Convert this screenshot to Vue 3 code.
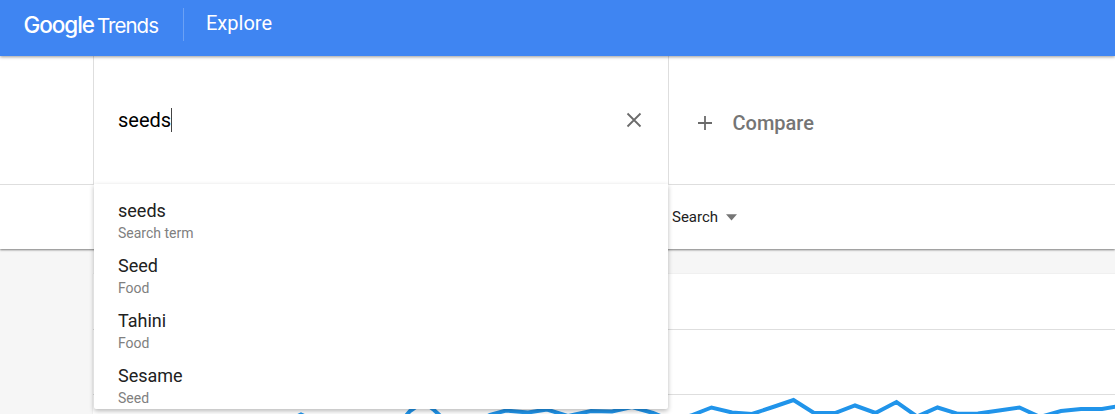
<script setup>
const suggestions = [
  { title: 'seeds', kind: 'Search term' },
  { title: 'Seed', kind: 'Food' },
  { title: 'Tahini', kind: 'Food' },
  { title: 'Sesame', kind: 'Seed' },
]
</script>

<template>
  <div class="page">
    <header class="topbar">
      <svg class="logo" width="140" height="40" viewBox="0 0 140 40">
        <text class="google" x="-0.5" y="26" textLength="71.5" lengthAdjust="spacing">Google</text>
        <text class="trends" x="73" y="26" textLength="62" lengthAdjust="spacing">Trends</text>
      </svg>
      <span class="divider"></span>
      <span class="section">Explore</span>
    </header>

    <section class="terms">
      <div class="term">
        <span class="query">seeds</span><span class="caret"></span>
        <svg class="close" width="16" height="16" viewBox="0 0 16 16">
          <path d="M1.5 1.5L14.5 14.5M14.5 1.5L1.5 14.5" />
        </svg>
        <ul class="menu">
          <li v-for="item in suggestions" :key="item.title">
            <span class="title">{{ item.title }}</span>
            <span class="kind">{{ item.kind }}</span>
          </li>
        </ul>
      </div>
      <div class="compare">
        <svg width="16" height="16" viewBox="0 0 16 16"><path d="M8 1V15M1 8H15" /></svg>
        <span>Compare</span>
      </div>
    </section>

    <section class="filters">
      <span>Search</span>
      <svg width="11" height="7" viewBox="0 0 11 7"><path d="M0 0.3H11L5.5 6.5Z" /></svg>
    </section>

    <main class="content">
      <div class="card">
        <div class="card-head"></div>
        <div class="card-tools"></div>
        <svg class="chart" width="1022" height="19" viewBox="93 395 1022 19">
          <polyline points="281,424 301,414.5 322,424" />
          <polyline points="398,425 410,411 423,402 434,410 447,422" />
          <polyline points="470,424 490,415 506,410.5 528,412.5 547,409.5 568,416 591,411 612,411.5 632,407 653,413 673,421 691,415.5 711.5,407.5 732,412.5 752,414 773,407 793.5,400 814,413 835,413 855,405.5 875.5,413 896.5,402 917,416.5 937.5,407.5 958,413.8 978,413.5 999,410.5 1019.5,407.5 1040,417 1061,411 1081,409 1102,409 1122,405.5" />
        </svg>
      </div>
    </main>
  </div>
</template>

<style>
body {
  margin: 0;
  overflow: hidden;
}
</style>

<style scoped>
.page {
  box-sizing: border-box;
  display: flex;
  flex-direction: column;
  width: 1115px;
  height: 414px;
  overflow: hidden;
  background: #f6f6f6;
  font-family: Roboto, sans-serif;
}
.topbar {
  position: relative;
  z-index: 3;
  display: flex;
  flex: none;
  height: 56px;
  background: #3f85f2;
  color: #fff;
  box-shadow: 0 1px 3px rgba(0, 0, 0, 0.4);
}
.logo {
  margin: 7px 0 0 24px;
  fill: #fff;
  font-family: Inter, sans-serif;
}
.google {
  font-size: 22.5px;
  font-weight: 500;
}
.trends {
  font-size: 20.5px;
  font-weight: 400;
}
.divider {
  width: 1px;
  height: 33px;
  margin: 8px 22px 0 19px;
  background: #6ba1f5;
}
.section {
  margin-top: 11px;
  font-size: 20px;
  line-height: 24px;
}
.terms {
  position: relative;
  z-index: 2;
  display: flex;
  flex: none;
  height: 128px;
  padding-left: 93px;
  background: #fff;
  border-bottom: 1px solid #dedede;
}
.term {
  position: relative;
  display: flex;
  align-items: center;
  box-sizing: border-box;
  width: 576px;
  padding: 0 26px 0 24px;
  border: solid #dedede;
  border-width: 0 1px;
}
.query {
  font-size: 20px;
  line-height: 24px;
  color: #000;
}
.caret {
  width: 1px;
  height: 24px;
  margin-left: -0.5px;
  background: #444;
}
.close {
  margin-left: auto;
}
.close,
.compare svg {
  fill: none;
  stroke: #6b6b6b;
  stroke-width: 1.8;
}
.menu {
  position: absolute;
  top: 128px;
  left: 0;
  box-sizing: border-box;
  width: 574px;
  height: 225px;
  margin: 0;
  padding: 15px 24px 0;
  overflow: hidden;
  list-style: none;
  background: #fff;
  border-radius: 0 0 2px 2px;
  box-shadow: 0 2px 5px rgba(0, 0, 0, 0.28);
}
.menu li {
  display: flex;
  flex-direction: column;
  height: 55px;
}
.title {
  font-size: 18px;
  line-height: 24px;
  color: #212121;
}
.kind {
  font-size: 14px;
  line-height: 20px;
  color: #808080;
}
.compare {
  display: flex;
  align-items: center;
  gap: 19.5px;
  padding: 5px 0 0 28px;
  font-size: 20px;
  font-weight: 500;
  color: #757575;
}
.filters {
  position: relative;
  z-index: 1;
  display: flex;
  flex: none;
  align-items: center;
  gap: 8px;
  height: 64px;
  padding-left: 672px;
  background: #fff;
  box-shadow: 0 1px 2px rgba(0, 0, 0, 0.5);
  font-size: 15px;
  color: #212121;
}
.filters svg {
  fill: #757575;
}
.content {
  flex: 1;
  padding: 25px 0 0 93px;
}
.card {
  background: #fff;
  box-shadow: 0 0 1px rgba(0, 0, 0, 0.15);
}
.card-head {
  height: 55px;
  border-bottom: 1px solid #dedede;
}
.card-tools {
  height: 64px;
  border-bottom: 1px solid #dedede;
}
.chart {
  display: block;
  fill: none;
  stroke: #2094ea;
  stroke-width: 4;
}
</style>
